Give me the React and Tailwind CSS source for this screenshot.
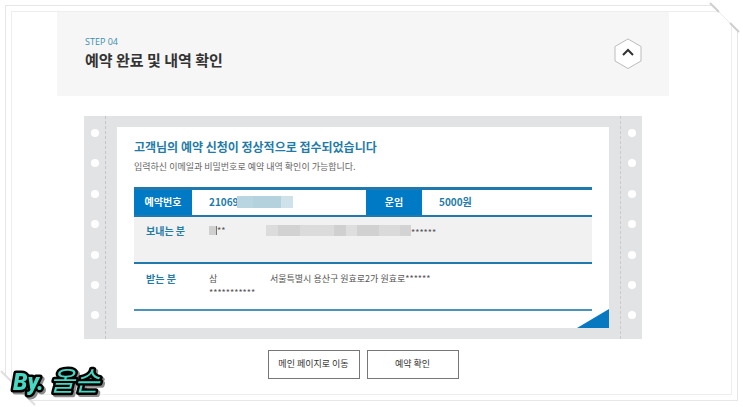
import React from "react";

const HOLES = [1, 2, 3, 4, 5, 6, 7];

const Perforation = ({ side }) => (
  <div
    className={
      side === "left"
        ? "w-[22px] shrink-0 flex flex-col items-center justify-between pt-[13px] pb-[19px] border-r border-dashed border-[#c3c5c7]"
        : "w-[22px] shrink-0 flex flex-col items-center justify-between pt-[13px] pb-[19px] border-l border-dashed border-[#d0c8ca]"
    }
  >
    {HOLES.map((hole) => (
      <span key={hole} className="size-2 rounded-full bg-white" />
    ))}
  </div>
);

const NumberMask = () => (
  <span className="-ml-0.5 flex h-3 w-14">
    <span className="w-4 bg-[#b9d5e2]" />
    <span className="w-7 bg-[#b3d2de]" />
    <span className="w-3 bg-[#cfe2ea]" />
  </span>
);

const AddressMask = () => (
  <span className="flex h-[11px] w-[145px] shrink-0">
    <span className="w-3 bg-[#dcdcdc]" />
    <span className="w-[22px] bg-[#d3d2d2]" />
    <span className="w-[34px] bg-[#dcdbdc]" />
    <span className="w-3 bg-[#d1d0d1]" />
    <span className="w-[11px] bg-[#dedede]" />
    <span className="w-[22px] bg-[#d2d1d1]" />
    <span className="w-[21px] bg-[#dbdada]" />
    <span className="w-[11px] bg-[#d3d3d3]" />
  </span>
);

const Signature = () => (
  <svg
    className="absolute bottom-0 left-[6px] overflow-visible drop-shadow-[2px_2px_0_#8b8b8b]"
    width="104"
    height="44"
    viewBox="0 0 104 44"
  >
    <g fill="#45d9c3" stroke="#000" paintOrder="stroke" fontStyle="italic" strokeLinejoin="round">
      <text
        x="7"
        y="28"
        fontFamily="Roboto, sans-serif"
        fontSize="23"
        fontWeight="900"
        strokeWidth="5"
      >
        By.
      </text>
      <text
        x="44"
        y="29"
        fontFamily="'Noto Sans CJK KR', sans-serif"
        fontSize="27"
        fontWeight="400"
        strokeWidth="5"
      >
        올슨
      </text>
    </g>
  </svg>
);

const ReservationTable = () => (
  <table className="mt-3 w-full table-fixed border-collapse text-left text-[9px] leading-3 text-[#555]">
    <colgroup>
      <col className="w-[58px]" />
      <col className="w-[66px]" />
      <col className="w-[108px]" />
      <col className="w-[56px]" />
      <col />
    </colgroup>
    <tbody>
      <tr className="h-[27px] border-t-3 border-b-2 border-[#2079ac] text-[10px]">
        <th scope="row" className="bg-[#007ac5] text-center font-bold text-white">
          예약번호
        </th>
        <td colSpan={2} className="pl-[17px] font-bold text-[#1f7ba8]">
          <div className="flex items-center">
            <span>21069</span>
            <NumberMask />
          </div>
        </td>
        <th scope="row" className="bg-[#007ac5] text-center font-bold text-white">
          운임
        </th>
        <td className="pl-[17px] font-bold text-[#1f7ba8]">5000원</td>
      </tr>
      <tr className="h-[47px] border-b-2 border-[#2079ac] bg-[#f1f1f1] align-top">
        <th scope="row" className="pl-3 pt-2 text-[10px] font-bold text-[#1f7ba8]">
          보내는 분
        </th>
        <td className="pl-[17px] pt-2">
          <div className="flex items-center">
            <span className="h-[9px] w-2 border-r border-[#777] bg-[#cfcfcf]" />
            <span>**</span>
          </div>
        </td>
        <td colSpan={3} className="pl-2 pt-2">
          <div className="flex items-center">
            <AddressMask />
            <span className="pt-1 leading-2">******</span>
          </div>
        </td>
      </tr>
      <tr className="h-[47px] border-b-2 border-[#4a93b9] align-top">
        <th scope="row" className="pl-3 pt-[9px] text-[10px] font-bold text-[#1f7ba8]">
          받는 분
        </th>
        <td className="pl-[17px] pt-[9px]">
          <p>삼</p>
          <p className="pt-0.5">***********</p>
        </td>
        <td colSpan={3} className="pl-3 pt-[9px]">
          서울특별시 용산구 원효로2가 원효로******
        </td>
      </tr>
    </tbody>
  </table>
);

const Ticket = () => (
  <section className="mx-[27px] mt-5 flex bg-[#e2e3e5]">
    <Perforation side="left" />
    <div className="relative mx-[11px] mt-[11px] mb-[11px] grow bg-white px-[17px] pt-3 pb-[17px]">
      <h2 className="text-[12px] leading-4 font-bold text-[#1f7ba8]">
        고객님의 예약 신청이 정상적으로 접수되었습니다
      </h2>
      <p className="mt-1 text-[9px] leading-4 text-[#666]">
        입력하신 이메일과 비밀번호로 예약 내역 확인이 가능합니다.
      </p>
      <ReservationTable />
      <svg
        className="absolute right-0 bottom-0"
        width="32"
        height="19"
        viewBox="0 0 32 19"
        aria-hidden="true"
      >
        <path d="M32 0V19H0Z" fill="#0879c0" />
      </svg>
    </div>
    <Perforation side="right" />
  </section>
);

const App = () => {
  return (
    <div className="relative bg-white p-[5px] font-['Noto_Sans_CJK_KR',sans-serif]">
      <div className="border border-[#e6e6e6] p-[5px]">
        <main className="border border-[#eeeeee] pr-[62px] pb-[15px] pl-[45px]">
          <header className="flex h-[84px] items-center justify-between bg-[#f6f6f6] pr-[27px] pl-[28px]">
            <div>
              <p className="font-['Open_Sans',sans-serif] text-[9px] leading-3 text-[#3a8fb0]">
                STEP 04
              </p>
              <h1 className="text-[15px] leading-6 font-bold text-[#333]">
                예약 완료 및 내역 확인
              </h1>
            </div>
            <button type="button" aria-label="접기">
              <svg width="28" height="32" viewBox="0 0 28 32" fill="none">
                <path d="M14 1L27 8.5V23L14 30.5L1 23V8.5Z" fill="#fff" stroke="#bcbcbc" />
                <path d="M9 17L14 12L19 17" stroke="#333" strokeWidth="2" />
              </svg>
            </button>
          </header>
          <Ticket />
          <div className="mt-[11px] flex justify-center gap-[7px]">
            <button
              type="button"
              className="h-[29px] w-[92px] border border-[#777] bg-white text-[9px] text-[#333]"
            >
              메인 페이지로 이동
            </button>
            <button
              type="button"
              className="h-[29px] w-[92px] border border-[#777] bg-white text-[9px] text-[#333]"
            >
              예약 확인
            </button>
          </div>
        </main>
      </div>

      {/* folded corners of the frame */}
      <svg
        className="absolute top-0 right-0"
        width="36"
        height="36"
        viewBox="0 0 36 36"
        aria-hidden="true"
      >
        <path d="M0 0H36V36Z" fill="#fff" />
        <path d="M3 3L29 29" stroke="#ececec" />
        <path d="M3 3L12 12M23 23L32 32" stroke="#cfcfcf" strokeWidth="2" />
      </svg>
      <svg
        className="absolute bottom-0 left-0"
        width="36"
        height="36"
        viewBox="0 0 36 36"
        aria-hidden="true"
      >
        <path d="M0 0V36H36Z" fill="#fff" />
        <path d="M1 1L35 35" stroke="#dedede" strokeWidth="2" />
      </svg>
      <Signature />
    </div>
  );
};

export default App;
